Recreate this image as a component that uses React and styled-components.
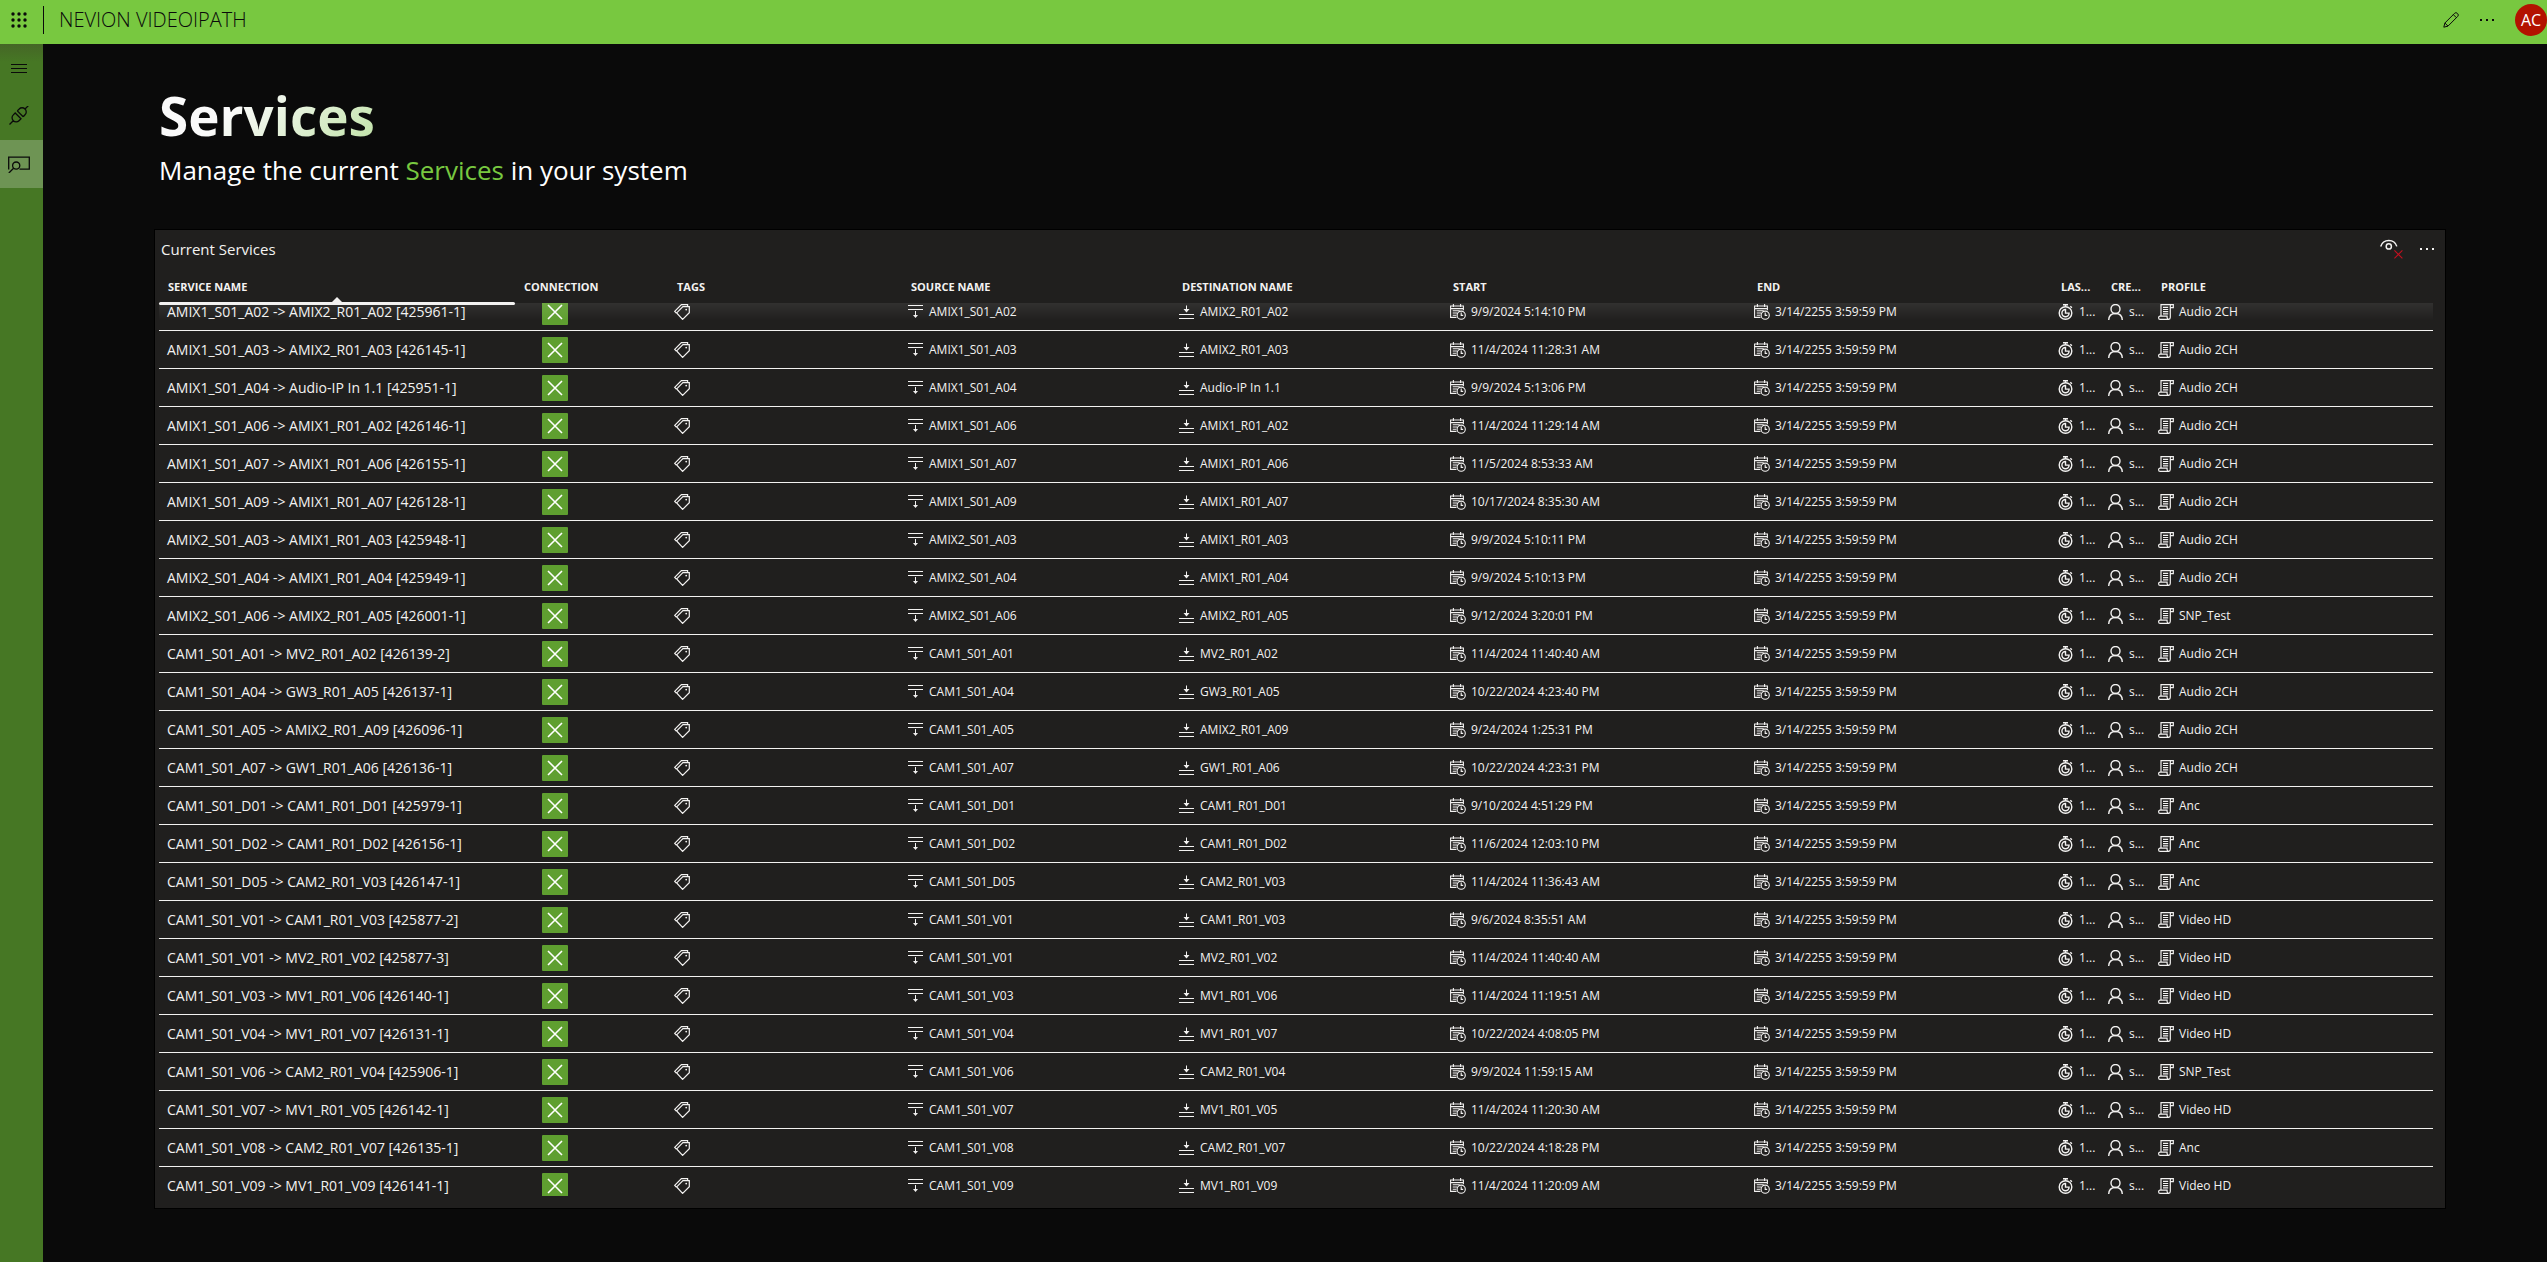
import React, { useLayoutEffect, useRef } from 'react';
import styled, { createGlobalStyle } from 'styled-components';

const COLUMNS =
  'minmax(0, 356fr) minmax(0, 153fr) minmax(0, 234fr) minmax(0, 271fr) minmax(0, 271fr) minmax(0, 304fr) minmax(0, 304fr) 50px 50px minmax(0, 281fr)';

const GlobalStyle = createGlobalStyle`
  *, *::before, *::after { box-sizing: border-box; }
  body {
    margin: 0;
    background: #0a0a0a;
    color: #f3f2f1;
    font-family: "Open Sans", "Noto Sans", sans-serif;
    font-size: 14px;
    overflow: hidden;
  }
`;

const Shell = styled.div`
  display: flex;
  flex-direction: column;
  height: 100vh;
`;

const TopBar = styled.header`
  display: flex;
  align-items: center;
  height: 44px;
  flex: none;
  padding-bottom: 4px;
  background: #78c840;
  color: #0a0a0a;
`;

const IconButton = styled.button`
  display: flex;
  align-items: center;
  justify-content: center;
  width: ${(p) => p.$width || 36}px;
  height: 38px;
  padding: 0;
  border: 0;
  background: none;
  color: inherit;
`;

const Divider = styled.span`
  width: 1px;
  height: 28px;
  margin: 0 15px 0 6px;
  background: #0a0a0a;
`;

const AppTitle = styled.span`
  flex: 1;
  font-size: 20px;
  font-weight: 300;
  line-height: 28px;
`;

const Avatar = styled.button`
  width: 32px;
  height: 32px;
  margin-left: 10px;
  padding: 0;
  border: 0;
  border-radius: 50%;
  background: #b31200;
  color: #fff;
  font: 400 16px/32px "Open Sans", "Noto Sans", sans-serif;
`;

const Main = styled.div`
  display: flex;
  flex: 1;
  min-height: 0;
`;

const SideBar = styled.nav`
  display: flex;
  flex-direction: column;
  width: 43px;
  flex: none;
  background: linear-gradient(#456626, #467724 18px);
`;

const NavButton = styled.button`
  display: flex;
  align-items: center;
  height: 48px;
  padding: 0 0 0 ${(p) => (p.$active ? 8 : 9)}px;
  border: 0;
  color: #0a0a0a;
  background: ${(p) => (p.$active ? '#6e9454' : 'transparent')};
`;

const Content = styled.main`
  display: flex;
  flex-direction: column;
  flex: 1;
  min-width: 0;
  padding: 38px 101px 53px 111px;
`;

const Heading = styled.h1`
  align-self: flex-start;
  margin: 0 0 0 5px;
  font-size: 53px;
  font-weight: 700;
  line-height: 68px;
  color: transparent;
  background: linear-gradient(135deg, #fafafa 35%, #bfe2a5 100%);
  background-clip: text;
`;

const Lead = styled.p`
  margin: 0 0 39px 5px;
  color: #fff;
  font-size: 26px;
  line-height: 40px;
`;

const Accent = styled.span`
  color: #78c840;
`;

const Panel = styled.section`
  display: flex;
  flex-direction: column;
  flex: 1;
  min-height: 0;
  padding: 0 12px 12px 4px;
  border: 1px solid #000;
  background: #201f1e;
`;

const PanelHead = styled.div`
  display: flex;
  align-items: center;
  height: 40px;
  flex: none;
  margin-right: -12px;
  padding-bottom: 2px;
`;

const PanelTitle = styled.h2`
  flex: 1;
  margin: 0 0 0 2px;
  font-size: 15px;
  font-weight: 400;
  line-height: 24px;
`;

const Table = styled.table`
  display: flex;
  flex-direction: column;
  flex: 1;
  min-height: 0;
`;

const Head = styled.thead`
  display: block;
  position: relative;
  z-index: 1;

  &::after {
    content: "";
    position: absolute;
    top: 100%;
    left: 0;
    right: 0;
    height: 18px;
    background: linear-gradient(rgba(255, 255, 255, 0.08), rgba(255, 255, 255, 0));
    pointer-events: none;
  }
`;

const HeadRow = styled.tr`
  display: grid;
  grid-template-columns: ${COLUMNS};
  height: 33px;
`;

const HeadCell = styled.th`
  position: relative;
  padding: 8px 0 0 9px;
  text-align: left;
  font-size: 11px;
  font-weight: 700;
  line-height: 18px;
  white-space: nowrap;
`;

const SortMark = styled.span`
  position: absolute;
  left: 0;
  right: 0;
  bottom: -2px;
  z-index: 1;
  height: 3px;
  border-radius: 2px;
  background: #f3f2f1;

  &::before {
    content: "";
    position: absolute;
    left: 50%;
    bottom: 100%;
    margin-left: -5px;
    border: 5px solid transparent;
    border-top: 0;
    border-bottom-color: #f3f2f1;
  }
`;

const Body = styled.tbody`
  display: block;
  flex: 1;
  min-height: 0;
  overflow-y: scroll;
  scrollbar-width: none;
`;

const Row = styled.tr`
  display: grid;
  grid-template-columns: ${COLUMNS};
  height: 38px;
  border-bottom: 1px solid #f3f2f1;
`;

const Cell = styled.td`
  display: flex;
  align-items: center;
  gap: 5px;
  min-width: 0;
  padding: 1px 0 0 ${(p) => p.$pad || 6}px;
  font-size: ${(p) => (p.$large ? 14 : 12)}px;
  line-height: 20px;
  white-space: nowrap;
`;

const ConnectionButton = styled.button`
  display: flex;
  align-items: center;
  justify-content: center;
  width: 26px;
  height: 26px;
  padding: 0;
  border: 0;
  border-radius: 1px;
  background: #5f9f30;
  color: #fff;
`;

const Svg = styled.svg`
  display: block;
  flex: none;
  fill: none;
  stroke: currentColor;
  stroke-width: ${(p) => p.$stroke || 1.2};
`;

const WaffleIcon = () => (
  <Svg width="16" height="16" viewBox="0 0 16 16">
    {[2, 8, 14].map((y) =>
      [2, 8, 14].map((x) => (
        <circle key={`${x}-${y}`} cx={x} cy={y} r="1.7" fill="currentColor" stroke="none" />
      ))
    )}
  </Svg>
);

const DotsIcon = () => (
  <Svg width="16" height="16" viewBox="0 0 16 16">
    {[1, 7, 13].map((x) => (
      <rect key={x} x={x} y="7" width="2" height="2" fill="currentColor" stroke="none" />
    ))}
  </Svg>
);

const PencilIcon = () => (
  <Svg width="16" height="16" viewBox="0 0 16 16" $stroke={1}>
    <path d="M.8 15.2 1.9 11 11.6 1.3a1.9 1.9 0 0 1 2.7 0l.4.4a1.9 1.9 0 0 1 0 2.7L5 14.100ZM1.900 11 5 14.100M10.300 2.600l3.100 3.100" />
  </Svg>
);

const MenuIcon = () => (
  <Svg width="20" height="16" viewBox="0 0 20 16" $stroke={1}>
    <path d="M2 4.5h16M2 8.5h16M2 12.5h16" />
  </Svg>
);

const PlugIcon = () => (
  <Svg width="20" height="20" viewBox="0 0 20 20" $stroke={1.3}>
    <path d="M.5 18.500l4-4M15.500 3.500l4-4M8.300 4.900l5.900 5.900M8.300 4.900l1.900-1.900a4 4 0 0 1 5.800 0 4 4 0 0 1 0 5.800l-1.800 2M6.200 7l5.800 5.800-2 1.900a4 4 0 0 1-5.700 0 4 4 0 0 1 0-5.800Z" />
  </Svg>
);

const MonitorSearchIcon = () => (
  <Svg width="23" height="18" viewBox="0 0 23 18" $stroke={1.3}>
    <path d="M.7 14.600V2.200h20.600v12h-9.800" />
    <circle cx="8.200" cy="10.600" r="3.600" />
    <path d="M5.600 13.200.8 18" />
  </Svg>
);

const EyeOffIcon = () => (
  <Svg width="24" height="22" viewBox="0 0 24 22" $stroke={1.5}>
    <path d="M1.700 8.400C3 4.300 5.800 2.400 9.800 2.400s6.800 1.900 8 6" />
    <circle cx="9.800" cy="8.400" r="2.600" />
    <path d="M15.400 12.400l8 8M23.400 12.400l-8 8" stroke="#c50f1f" strokeWidth="1.1" />
  </Svg>
);

const CloseIcon = () => (
  <Svg width="18" height="18" viewBox="0 0 18 18" $stroke={1.6}>
    <path d="M2 2l14 14M16 2l-14 14" />
  </Svg>
);

const TagIcon = () => (
  <Svg width="16" height="16" viewBox="0 0 16 16">
    <path d="M2.700 8.900 8.900 2.700h6.400v6L8.600 15.400Z M2.300 9 .7 7.400 7.400.7h6.200v1.800" />
    <circle cx="12.200" cy="5.600" r=".9" fill="currentColor" stroke="none" />
  </Svg>
);

const SourceIcon = () => (
  <Svg width="16" height="16" viewBox="0 0 16 16" $stroke={1}>
    <path d="M0 1.500h15M0 5.500h15M7.500 7v6" />
    <path d="M5 11h5l-2.500 3Z" fill="currentColor" stroke="none" />
  </Svg>
);

const DestinationIcon = () => (
  <Svg width="16" height="16" viewBox="0 0 16 16" $stroke={1}>
    <path d="M0 10.500h15M0 14.500h15M7.500 1.500v6" />
    <path d="M4.500 5h6l-3 3.500Z" fill="currentColor" stroke="none" />
  </Svg>
);

const CalendarIcon = () => (
  <Svg width="16" height="16" viewBox="0 0 16 16" $stroke={1.1}>
    <path d="M6.500 13.400H.6V2h12.800v4.200M.6 4.600h12.800M3.400 0v3M10.600 0v3M2.700 6.800h7M2.700 9h4.500M2.700 11.200h3.600" />
    <circle cx="11.200" cy="11.200" r="4.100" />
    <path d="M11.200 8.600v2.800h2" />
  </Svg>
);

const StopwatchIcon = () => (
  <Svg width="16" height="16" viewBox="0 0 16 16" $stroke={1.4}>
    <path d="M5 .7h5M7.500.7v2M12.300 2.200l1.600 1.600" />
    <circle cx="7.500" cy="9" r="6.300" />
    <path d="M7.500 5.500a3.600 3.600 0 1 0 3.600 3.600H7.500Z" />
  </Svg>
);

const PersonIcon = () => (
  <Svg width="16" height="16" viewBox="0 0 16 16" $stroke={1.4}>
    <circle cx="7.500" cy="5" r="4.500" />
    <path d="M.7 16c.2-4.200 2.800-6.500 6.800-6.500s6.600 2.300 6.800 6.500" />
  </Svg>
);

const ScrollIcon = () => (
  <Svg width="16" height="16" viewBox="0 0 16 16" $stroke={1.2}>
    <path d="M3 12V.7h12.300v3h-3v9.600c0 1.300-.6 2-1.600 2H2.100c-2 0-2-3.200 0-3.200h7v1.500c0 1 .6 1.700 1.600 1.700M12.300 3.700V2c0-.8.5-1.300 1.300-1.300M5 3.300h5.200M5 5.500h5.200M5 7.700h5.200M5 9.900h5.200" />
  </Svg>
);

const HEADERS = [
  'SERVICE NAME', 'CONNECTION', 'TAGS', 'SOURCE NAME', 'DESTINATION NAME',
  'START', 'END', 'LAS...', 'CRE...', 'PROFILE',
];

const END = '3/14/2255 3:59:59 PM';

const SERVICES = [
  ['AMIX1_S01_A02', 'AMIX2_R01_A02', '425961-1', '9/9/2024 5:14:10 PM', 'Audio 2CH'],
  ['AMIX1_S01_A03', 'AMIX2_R01_A03', '426145-1', '11/4/2024 11:28:31 AM', 'Audio 2CH'],
  ['AMIX1_S01_A04', 'Audio-IP In 1.1', '425951-1', '9/9/2024 5:13:06 PM', 'Audio 2CH'],
  ['AMIX1_S01_A06', 'AMIX1_R01_A02', '426146-1', '11/4/2024 11:29:14 AM', 'Audio 2CH'],
  ['AMIX1_S01_A07', 'AMIX1_R01_A06', '426155-1', '11/5/2024 8:53:33 AM', 'Audio 2CH'],
  ['AMIX1_S01_A09', 'AMIX1_R01_A07', '426128-1', '10/17/2024 8:35:30 AM', 'Audio 2CH'],
  ['AMIX2_S01_A03', 'AMIX1_R01_A03', '425948-1', '9/9/2024 5:10:11 PM', 'Audio 2CH'],
  ['AMIX2_S01_A04', 'AMIX1_R01_A04', '425949-1', '9/9/2024 5:10:13 PM', 'Audio 2CH'],
  ['AMIX2_S01_A06', 'AMIX2_R01_A05', '426001-1', '9/12/2024 3:20:01 PM', 'SNP_Test'],
  ['CAM1_S01_A01', 'MV2_R01_A02', '426139-2', '11/4/2024 11:40:40 AM', 'Audio 2CH'],
  ['CAM1_S01_A04', 'GW3_R01_A05', '426137-1', '10/22/2024 4:23:40 PM', 'Audio 2CH'],
  ['CAM1_S01_A05', 'AMIX2_R01_A09', '426096-1', '9/24/2024 1:25:31 PM', 'Audio 2CH'],
  ['CAM1_S01_A07', 'GW1_R01_A06', '426136-1', '10/22/2024 4:23:31 PM', 'Audio 2CH'],
  ['CAM1_S01_D01', 'CAM1_R01_D01', '425979-1', '9/10/2024 4:51:29 PM', 'Anc'],
  ['CAM1_S01_D02', 'CAM1_R01_D02', '426156-1', '11/6/2024 12:03:10 PM', 'Anc'],
  ['CAM1_S01_D05', 'CAM2_R01_V03', '426147-1', '11/4/2024 11:36:43 AM', 'Anc'],
  ['CAM1_S01_V01', 'CAM1_R01_V03', '425877-2', '9/6/2024 8:35:51 AM', 'Video HD'],
  ['CAM1_S01_V01', 'MV2_R01_V02', '425877-3', '11/4/2024 11:40:40 AM', 'Video HD'],
  ['CAM1_S01_V03', 'MV1_R01_V06', '426140-1', '11/4/2024 11:19:51 AM', 'Video HD'],
  ['CAM1_S01_V04', 'MV1_R01_V07', '426131-1', '10/22/2024 4:08:05 PM', 'Video HD'],
  ['CAM1_S01_V06', 'CAM2_R01_V04', '425906-1', '9/9/2024 11:59:15 AM', 'SNP_Test'],
  ['CAM1_S01_V07', 'MV1_R01_V05', '426142-1', '11/4/2024 11:20:30 AM', 'Video HD'],
  ['CAM1_S01_V08', 'CAM2_R01_V07', '426135-1', '10/22/2024 4:18:28 PM', 'Anc'],
  ['CAM1_S01_V09', 'MV1_R01_V09', '426141-1', '11/4/2024 11:20:09 AM', 'Video HD'],
];

function ServiceTable() {
  const body = useRef(null);

  useLayoutEffect(() => {
    body.current.scrollTop = 10;
  }, []);

  return (
    <Table>
      <Head>
        <HeadRow>
          {HEADERS.map((label, i) => (
            <HeadCell key={label} scope="col">
              {label}
              {i === 0 && <SortMark />}
            </HeadCell>
          ))}
        </HeadRow>
      </Head>
      <Body ref={body}>
        {SERVICES.map(([source, destination, id, start, profile]) => (
          <Row key={id}>
            <Cell $pad={8} $large>{`${source} -> ${destination} [${id}]`}</Cell>
            <Cell $pad={27}>
              <ConnectionButton aria-label="Disconnect"><CloseIcon /></ConnectionButton>
            </Cell>
            <Cell><TagIcon /></Cell>
            <Cell><SourceIcon />{source}</Cell>
            <Cell><DestinationIcon />{destination}</Cell>
            <Cell><CalendarIcon />{start}</Cell>
            <Cell><CalendarIcon />{END}</Cell>
            <Cell><StopwatchIcon />1...</Cell>
            <Cell><PersonIcon />s...</Cell>
            <Cell><ScrollIcon />{profile}</Cell>
          </Row>
        ))}
      </Body>
    </Table>
  );
}

export default function App() {
  return (
    <Shell>
      <GlobalStyle />
      <TopBar>
        <IconButton $width={37} aria-label="Apps"><WaffleIcon /></IconButton>
        <Divider />
        <AppTitle>NEVION VIDEOIPATH</AppTitle>
        <IconButton aria-label="Edit"><PencilIcon /></IconButton>
        <IconButton aria-label="More"><DotsIcon /></IconButton>
        <Avatar aria-label="Account">AC</Avatar>
      </TopBar>
      <Main>
        <SideBar>
          <NavButton aria-label="Menu"><MenuIcon /></NavButton>
          <NavButton aria-label="Connections"><PlugIcon /></NavButton>
          <NavButton $active aria-label="Services"><MonitorSearchIcon /></NavButton>
        </SideBar>
        <Content>
          <Heading>Services</Heading>
          <Lead>
            Manage the current <Accent>Services</Accent> in your system
          </Lead>
          <Panel>
            <PanelHead>
              <PanelTitle>Current Services</PanelTitle>
              <IconButton aria-label="Hide"><EyeOffIcon /></IconButton>
              <IconButton aria-label="Panel menu"><DotsIcon /></IconButton>
            </PanelHead>
            <ServiceTable />
          </Panel>
        </Content>
      </Main>
    </Shell>
  );
}
